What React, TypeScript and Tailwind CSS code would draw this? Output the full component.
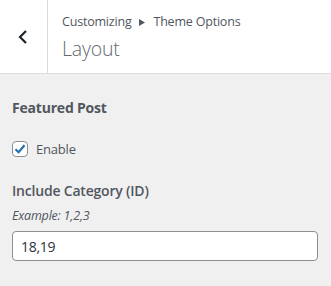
export default function App() {
  return (
    <div className="w-[331px] h-[286px] bg-[#f0f0f1] text-[#50575e] font-['Open_Sans',sans-serif] overflow-hidden">
      <div className="flex h-[74px] bg-white border-b border-[#dcdcde]">
        <div className="w-[48px] flex items-center justify-center border-r border-[#dcdcde]">
          <svg width="12" height="14" viewBox="0 0 12 14" className="mt-[1px] -ml-[2px]">
            <path d="M9 1 L3 7 L9 13" fill="none" stroke="#1d2327" strokeWidth="2.2" />
          </svg>
        </div>
        <div className="pl-[14px] pt-[12px]">
          <div className="flex items-center text-[12.5px] leading-[20px] text-[#50575e] tracking-[-0.2px]">
            <span>Customizing</span>
            <svg width="6" height="7" viewBox="0 0 6 7" className="mx-[8px]">
              <path d="M0 0 L6 3.5 L0 7 Z" fill="#50575e" />
            </svg>
            <span>Theme Options</span>
          </div>
          <div className="text-[19.5px] leading-[26px] mt-[4px] font-light text-[#646970] tracking-[-0.2px]">Layout</div>
        </div>
      </div>
      <div className="px-[12px] pt-[24px]">
        <div className="text-[14px] font-bold leading-[20px] text-[#50575e] tracking-[-0.2px]">Featured Post</div>
        <label className="flex items-center mt-[22px]">
          <span className="w-[16px] h-[16px] rounded-[4px] border border-[#8c8f94] bg-white flex items-center justify-center">
            <svg width="14" height="14" viewBox="0 0 14 14">
              <path d="M2.5 7.2 L5.6 10.2 L11.5 3.2" fill="none" stroke="#2271b1" strokeWidth="2.2" />
            </svg>
          </span>
          <span className="ml-[8px] text-[13px] leading-[18px] text-[#50575e] tracking-[-0.2px]">Enable</span>
        </label>
        <div className="mt-[23px] text-[14px] font-semibold leading-[20px] text-[#50575e] tracking-[-0.2px]">Include Category (ID)</div>
        <div className="mt-[6px] text-[12.5px] italic leading-[18px] text-[#50575e] tracking-[-0.2px]">Example: 1,2,3</div>
        <div className="mt-[6px] h-[30px] w-[306px] bg-white border border-[#8c8f94] rounded-[4px] flex items-center px-[8px] text-[14px] text-[#2c3338] tracking-[-0.3px]">
          18,19
        </div>
      </div>
    </div>
  )
}
